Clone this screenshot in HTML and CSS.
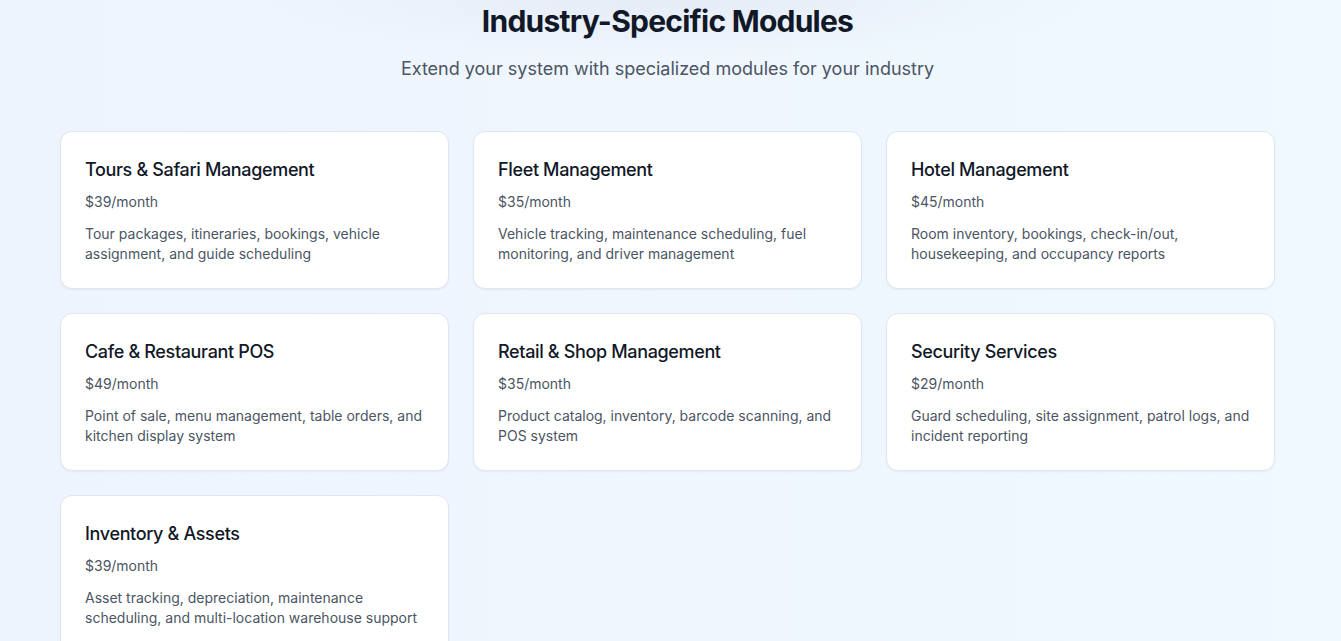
FILE: index.html
```html
<!DOCTYPE html>
<html lang="en">
<head>
<meta charset="utf-8">
<title>Industry-Specific Modules</title>
<link rel="stylesheet" href="styles.css">
</head>
<body>
<section class="modules">
  <div class="container">
    <header class="intro">
      <h2 class="title">Industry-Specific Modules</h2>
      <p class="subtitle">Extend your system with specialized modules for your industry</p>
    </header>
    <div class="grid">
      <div class="card">
        <h3 class="card-title">Tours &amp; Safari Management</h3>
        <p class="price">$39/month</p>
        <p class="desc">Tour packages, itineraries, bookings, vehicle assignment, and guide scheduling</p>
      </div>
      <div class="card">
        <h3 class="card-title">Fleet Management</h3>
        <p class="price">$35/month</p>
        <p class="desc">Vehicle tracking, maintenance scheduling, fuel monitoring, and driver management</p>
      </div>
      <div class="card">
        <h3 class="card-title">Hotel Management</h3>
        <p class="price">$45/month</p>
        <p class="desc">Room inventory, bookings, check-in/out, housekeeping, and occupancy reports</p>
      </div>
      <div class="card">
        <h3 class="card-title">Cafe &amp; Restaurant POS</h3>
        <p class="price">$49/month</p>
        <p class="desc">Point of sale, menu management, table orders, and kitchen display system</p>
      </div>
      <div class="card">
        <h3 class="card-title">Retail &amp; Shop Management</h3>
        <p class="price">$35/month</p>
        <p class="desc">Product catalog, inventory, barcode scanning, and POS system</p>
      </div>
      <div class="card">
        <h3 class="card-title">Security Services</h3>
        <p class="price">$29/month</p>
        <p class="desc">Guard scheduling, site assignment, patrol logs, and incident reporting</p>
      </div>
      <div class="card">
        <h3 class="card-title">Inventory &amp; Assets</h3>
        <p class="price">$39/month</p>
        <p class="desc">Asset tracking, depreciation, maintenance scheduling, and multi-location warehouse support</p>
      </div>
    </div>
  </div>
</section>
</body>
</html>
```
FILE: styles.css
```css
* { box-sizing: border-box; }
html, body { margin: 0; padding: 0; }
body {
  font-family: Inter, "Noto Sans", "Liberation Sans", sans-serif;
  background: linear-gradient(90deg, #eef4fe 0%, #eff6fe 50%, #f0f9ff 100%);
  min-height: 641px;
  color: #111827;
}
.modules {
  padding: 3px 6px 48px 0;
  background: radial-gradient(ellipse 420px 60px at 50% 0%, rgba(226,232,244,0.7), rgba(255,255,255,0) 100%);
}
.container {
  width: 1215px;
  margin: 0 auto;
}
.intro { text-align: center; margin-bottom: 48px; }
.title {
  margin: 0 0 16px;
  font-size: 30px;
  line-height: 36px;
  font-weight: 700;
  letter-spacing: -0.75px;
  color: #111827;
}
.subtitle {
  margin: 0;
  font-size: 18px;
  line-height: 28px;
  color: #4b5563;
}
.grid {
  display: grid;
  grid-template-columns: repeat(3, 1fr);
  gap: 24px;
}
.card {
  background: #ffffff;
  border: 1px solid #dfe6f1;
  border-radius: 12px;
  padding: 24px;
  box-shadow: 0 1px 2px rgba(15, 23, 42, 0.05);
}
.card-title {
  margin: 0 0 8px;
  font-size: 18px;
  line-height: 28px;
  font-weight: 500;
  letter-spacing: -0.35px;
  color: #111827;
}
.price {
  margin: 0 0 12px;
  font-size: 14px;
  line-height: 20px;
  color: #4b5563;
}
.desc {
  margin: 0;
  font-size: 14px;
  line-height: 20px;
  color: #4b5563;
}
```
